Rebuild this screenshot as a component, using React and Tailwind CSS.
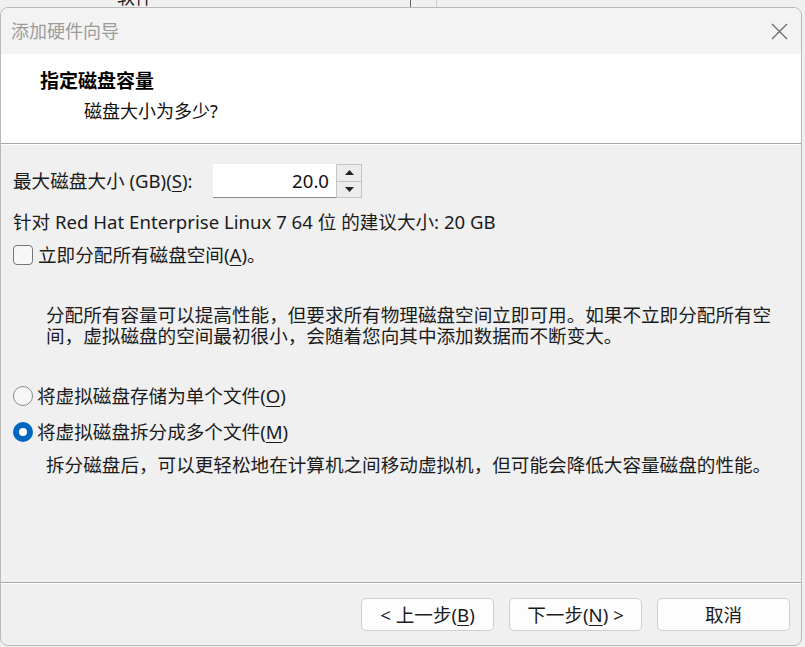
import React from "react";

const font = { fontFamily: '"Noto Sans", "Noto Sans CJK SC", sans-serif' };

function U({ children }) {
  return <span className="underline underline-offset-[3px] decoration-1">{children}</span>;
}

function Radio({ checked }) {
  return checked ? (
    <span className="w-[20px] h-[20px] rounded-full bg-[#0067c0] flex items-center justify-center shrink-0">
      <span className="w-[8px] h-[8px] rounded-full bg-white" />
    </span>
  ) : (
    <span className="w-[20px] h-[20px] rounded-full border border-[#8a8a8a] bg-[#f7f7f7] shrink-0" />
  );
}

function Btn({ children }) {
  return (
    <button className="w-[133px] h-[33px] rounded-[5px] border border-[#d0d0d0] bg-[#fdfdfd] text-[18.6px] text-[#1b1b1b] flex items-center justify-center">
      {children}
    </button>
  );
}

export default function App() {
  return (
    <div className="w-[805px] h-[647px] bg-[#f0f0f0] overflow-hidden text-[#1b1b1b]" style={font}>
      {/* window behind */}
      <div className="h-[7px] flex items-end overflow-hidden">
        <span className="ml-[117px] text-[18px] leading-[24px] -mb-[2px] h-[24px] shrink-0">软件</span>
        <span className="ml-[257px] w-px h-[7px] bg-[#666] shrink-0" />
        <span className="ml-[25px] w-px h-[7px] bg-[#cfcfcf] shrink-0" />
      </div>

      <div className="w-[802px] h-[639px] border border-[#b9b9b9] rounded-[8px] overflow-hidden flex flex-col bg-[#f0f0f0]">
        {/* title bar */}
        <div className="h-[46px] bg-[#f3f3f3] flex items-center justify-between pl-[10px] pr-[13px] shrink-0">
          <span className="text-[18px] text-[#9b9b9b] leading-none">添加硬件向导</span>
          <svg width="17" height="17" viewBox="0 0 17 17">
            <path d="M1 1 L16 16 M16 1 L1 16" stroke="#6b6b6b" strokeWidth="1.3" />
          </svg>
        </div>

        {/* header */}
        <div className="h-[89px] bg-white pl-[39px] pt-[14px] shrink-0">
          <div className="text-[19px] font-bold leading-[26px] text-black">指定磁盘容量</div>
          <div className="text-[18px] leading-[26px] mt-[4px] pl-[44px] text-[#111]">磁盘大小为多少?</div>
        </div>
        <div className="h-[2px] border-t border-[#a8a8a8] border-b border-b-white shrink-0" />

        {/* body */}
        <div className="flex-1 px-[12px] pt-[19px] text-[18.6px]">
          <div className="flex items-center h-[34px]">
            <span className="w-[200px] leading-[24px]">
              最大磁盘大小 (GB)(<U>S</U>):
            </span>
            <div className="w-[123px] h-[34px] bg-white border-b border-[#8c8c8c] flex items-center justify-end pr-[7px] text-[#111]">
              20.0
            </div>
            <div className="w-[26px] h-[34px] border border-[#c4c4c4] flex flex-col bg-[#ececec]">
              <div className="flex-1 border-b border-[#c4c4c4] flex items-center justify-center">
                <svg width="9" height="5" viewBox="0 0 9 5"><path d="M4.5 0 L9 5 L0 5 Z" fill="#222" /></svg>
              </div>
              <div className="flex-1 flex items-center justify-center">
                <svg width="9" height="5" viewBox="0 0 9 5"><path d="M0 0 L9 0 L4.5 5 Z" fill="#222" /></svg>
              </div>
            </div>
          </div>

          <div className="mt-[12px] leading-[24px]">
            针对 Red Hat Enterprise Linux 7 64 位 的建议大小: 20 GB
          </div>

          <div className="mt-[9px] flex items-center gap-[5px] leading-[24px]">
            <span className="w-[20px] h-[20px] rounded-[4px] border border-[#777] bg-[#f7f7f7] shrink-0" />
            <span>
              立即分配所有磁盘空间(<U>A</U>)。
            </span>
          </div>

          <div className="mt-[37px] pl-[33px] leading-[21px]">
            <div>分配所有容量可以提高性能，但要求所有物理磁盘空间立即可用。如果不立即分配所有空</div>
            <div>间，虚拟磁盘的空间最初很小，会随着您向其中添加数据而不断变大。</div>
          </div>

          <div className="mt-[38px] flex items-center gap-[4px] leading-[24px]">
            <Radio />
            <span>
              将虚拟磁盘存储为单个文件(<U>O</U>)
            </span>
          </div>
          <div className="mt-[12px] flex items-center gap-[4px] leading-[24px]">
            <Radio checked />
            <span>
              将虚拟磁盘拆分成多个文件(<U>M</U>)
            </span>
          </div>
          <div className="mt-[9px] pl-[33px] leading-[24px]">
            拆分磁盘后，可以更轻松地在计算机之间移动虚拟机，但可能会降低大容量磁盘的性能。
          </div>
        </div>

        <div className="h-[2px] border-t border-[#a8a8a8] border-b border-b-white shrink-0" />

        {/* footer */}
        <div className="h-[61px] shrink-0 flex justify-end items-start pt-[14px] pr-[11px] gap-[15px]">
          <Btn>&lt; 上一步(<U>B</U>)</Btn>
          <Btn>下一步(<U>N</U>) &gt;</Btn>
          <Btn>取消</Btn>
        </div>
      </div>
    </div>
  );
}
